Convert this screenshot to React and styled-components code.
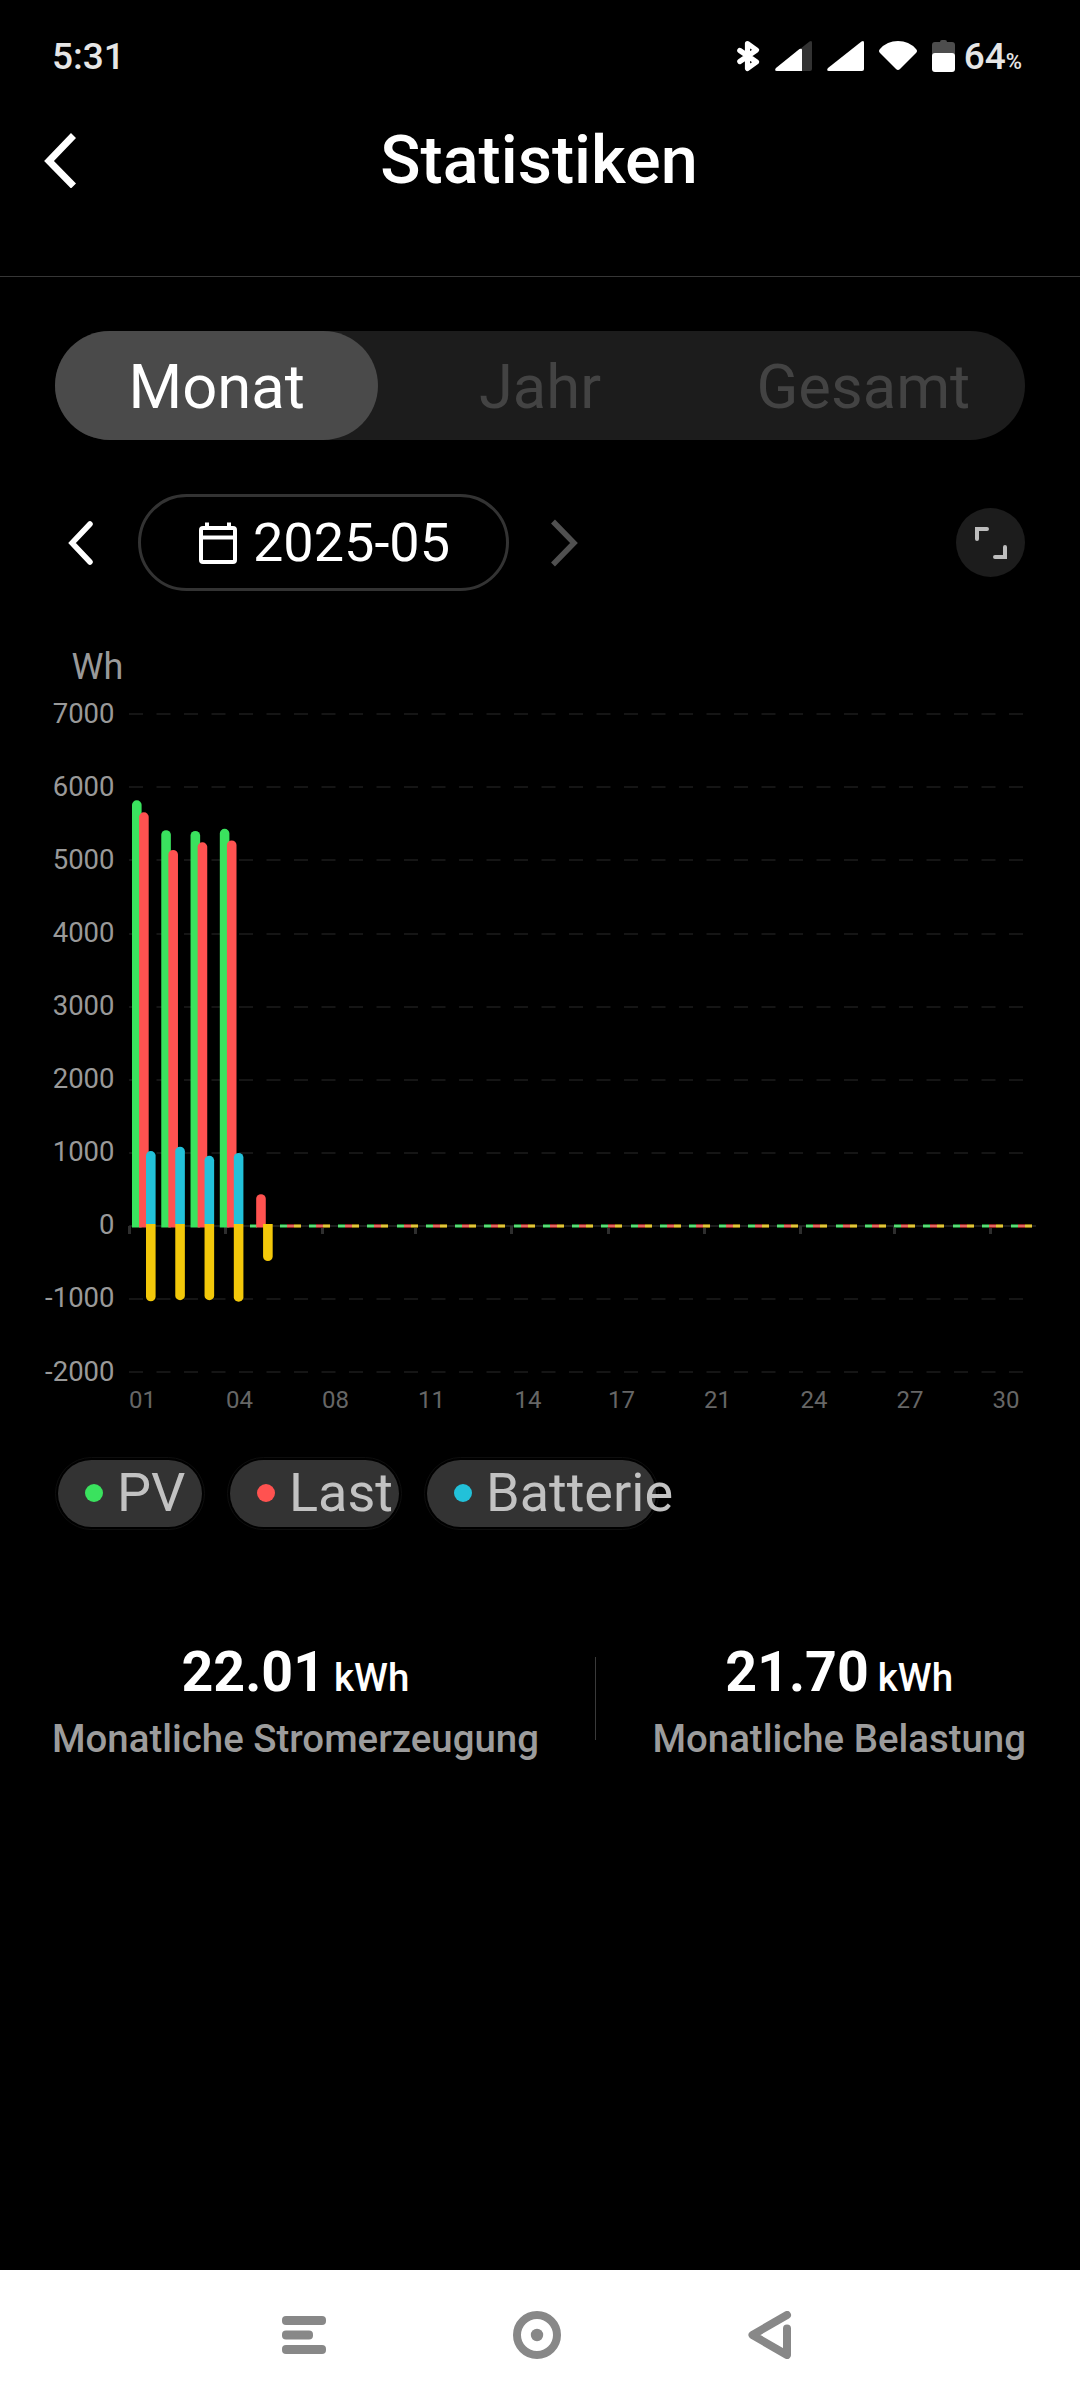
import React from "react";
import styled, { createGlobalStyle } from "styled-components";

const GlobalStyle = createGlobalStyle`
  * {
    box-sizing: border-box;
  }
  body {
    margin: 0;
    background: #000;
    font-family: Roboto, "Liberation Sans", sans-serif;
  }
`;

const Screen = styled.div`
  width: 1080px;
  height: 2400px;
  display: flex;
  flex-direction: column;
  background: #000;
  color: #fff;
  overflow: hidden;
`;

const StatusBar = styled.div`
  height: 112px;
  padding: 0 58px 0 52px;
  display: flex;
  align-items: center;
  justify-content: space-between;
  color: #e6e6e6;
  font-size: 37px;
  font-weight: 500;
  svg {
    display: block;
  }
`;

const StatusIcons = styled.div`
  display: flex;
  align-items: center;
  gap: 15px;
`;

const Battery = styled.div`
  display: flex;
  align-items: center;
  gap: 9px;
  small {
    font-size: 22px;
  }
`;

const Header = styled.header`
  height: 165px;
  padding: 0 44px 68px;
  display: grid;
  grid-template-columns: 32px 1fr 32px;
  align-items: center;
  border-bottom: 1px solid #363636;
`;

const Title = styled.h1`
  margin: 0 2px 0 0;
  font-size: 66.5px;
  font-weight: 500;
  text-align: center;
`;

const Tabs = styled.div`
  height: 109px;
  margin: 54px 55px 0;
  display: grid;
  grid-template-columns: repeat(3, 1fr);
  border-radius: 55px;
  background: #1c1c1c;
`;

const Tab = styled.div`
  padding-top: 2px;
  display: flex;
  align-items: center;
  justify-content: center;
  border-radius: 55px;
  font-size: 61.5px;
  color: ${props => (props.$active ? "#fff" : "#434343")};
  background: ${props => (props.$active ? "#4a4a4a" : "transparent")};
`;

const DateRow = styled.div`
  height: 97px;
  margin: 54px 55px 0;
  padding-left: 13px;
  display: flex;
  align-items: center;
`;

const DatePill = styled.div`
  width: 371px;
  height: 97px;
  margin: 0 42px 0 45px;
  padding-left: 2px;
  display: flex;
  align-items: center;
  justify-content: center;
  gap: 16px;
  border: 3px solid #333;
  border-radius: 49px;
  font-size: 54px;
`;

const ExpandButton = styled.div`
  width: 69px;
  height: 69px;
  margin-left: auto;
  display: flex;
  align-items: center;
  justify-content: center;
  border-radius: 50%;
  background: #1c1c1c;
`;

const ChartSvg = styled.svg`
  display: block;
  margin-top: 39px;
  flex: none;
  font-family: Roboto, "Liberation Sans", sans-serif;
`;

const Legend = styled.div`
  display: flex;
  gap: 22px;
  margin: 27px 0 0 55px;
`;

const LegendItem = styled.div`
  width: ${props => props.$width}px;
  height: 73px;
  padding: 2px;
  border: 1px solid #0e0e0e;
  border-radius: 37px;
`;

const LegendFill = styled.div`
  height: 67px;
  padding: 0 0 2px 27px;
  display: flex;
  align-items: center;
  gap: 14px;
  border-radius: 34px;
  background: #333;
  color: #c2c2c2;
  font-size: 54px;
  white-space: nowrap;
`;

const Dot = styled.span`
  flex: none;
  width: 18px;
  height: 18px;
  border-radius: 50%;
  background: ${props => props.$color};
`;

const Totals = styled.div`
  display: flex;
  align-items: center;
  justify-content: space-between;
  margin: 108px 54px 0 52px;
`;

const Total = styled.div`
  display: flex;
  flex-direction: column;
  align-items: center;
`;

const TotalValue = styled.div`
  height: 70px;
  line-height: 70px;
  font-size: 55.5px;
  font-weight: 700;
  span {
    margin-left: 9px;
    font-size: 38.5px;
    font-weight: 500;
  }
`;

const TotalLabel = styled.div`
  height: 62px;
  line-height: 62px;
  font-size: 38.4px;
  font-weight: 500;
  color: #9c9c9c;
`;

const TotalDivider = styled.div`
  width: 1px;
  height: 83px;
  margin-bottom: 11px;
  background: #3a3a3a;
`;

const NavBar = styled.nav`
  height: 130px;
  margin-top: auto;
  padding: 0 288px 0 282px;
  display: flex;
  align-items: center;
  justify-content: space-between;
  background: #fff;
`;

const GREEN = "#3ae25e";
const RED = "#ff5250";
const BLUE = "#22c1d9";
const YELLOW = "#f3c80a";

// [pv, load, charge, discharge] in Wh
const days = [
  [5825, 5660, 1025, -1030],
  [5415, 5145, 1085, -1015],
  [5405, 5250, 960, -1015],
  [5435, 5275, 1000, -1035],
  [0, 435, 0, -480]
];

const TOP = 714.3;
const STEP = 73.08;
const ZERO = 1226;
const FIRST_BAR = 132;
const DAY = 29.27;

const ticks = [
  { x: 129, labelX: 142.5, label: "01" },
  { x: 225, labelX: 239.5, label: "04" },
  { x: 322, labelX: 335.5, label: "08" },
  { x: 415, labelX: 431.5, label: "11" },
  { x: 511, labelX: 528, label: "14" },
  { x: 608, labelX: 621.5, label: "17" },
  { x: 704, labelX: 717.5, label: "21" },
  { x: 800, labelX: 814, label: "24" },
  { x: 894, labelX: 910, label: "27" },
  { x: 990, labelX: 1006, label: "30" }
];

const Bar = ({ x, value, color }) => {
  const y = ZERO - (value / 1000) * STEP;
  const up = value > 0;
  const base = up && color !== BLUE ? 1227.5 : 1224;
  const r = up ? 4.5 : -4.5;
  const sweep = up ? 1 : 0;
  return (
    <path
      fill={color}
      d={`M${x} ${base}V${y + r}a4.8 4.5 0 0 ${sweep} 4.8 ${-r}a4.8 4.5 0 0 ${sweep} 4.8 ${r}V${base}z`}
    />
  );
};

const EmptyBar = ({ x, color, edge }) => (
  <g>
    <rect x={x} y="1224" width="7" height="4" fill={edge} />
    <rect x={x} y="1225" width="7" height="2" fill={color} />
  </g>
);

const Chart = () => (
  <ChartSvg width="1080" height="800" viewBox="0 630 1080 800">
    <text x="71.5" y="679" fontSize="36" fill="#999">
      Wh
    </text>
    {[7, 6, 5, 4, 3, 2, 1, 0, -1, -2].map((n, i) => (
      <g key={n}>
        <text
          x="114.5"
          y={TOP + i * STEP + 8.5}
          textAnchor="end"
          fontSize="27.5"
          fill="#999"
        >
          {n * 1000}
        </text>
        {n !== 0 && (
          <line
            x1="129"
            x2="1024"
            y1={Math.round(TOP + i * STEP)}
            y2={Math.round(TOP + i * STEP)}
            stroke="#151515"
            strokeWidth="2"
            strokeDasharray="14 13.5"
          />
        )}
      </g>
    ))}
    <rect x="129" y="1225" width="907" height="2" fill="#1d1d1d" />
    {ticks.map(tick => (
      <g key={tick.label}>
        <rect x={tick.x - 1} y="1226" width="3" height="8" fill="#2e2e2e" />
        <text
          x={tick.labelX}
          y="1408"
          textAnchor="middle"
          fontSize="24"
          fill="#666"
        >
          {tick.label}
        </text>
      </g>
    ))}
    {Array.from({ length: 31 }, (_, i) => {
      const x = FIRST_BAR + i * DAY;
      const left = Math.round(x + 1.15);
      const day = days[i];
      if (!day) {
        return (
          <g key={i}>
            <EmptyBar x={left} color="#5cd979" edge="#167a2b" />
            <EmptyBar x={left + 7} color="#e2645f" edge="#8e2222" />
            <EmptyBar x={left + 14} color="#e0c53c" edge="#85700d" />
          </g>
        );
      }
      const [pv, load, charge, discharge] = day;
      return (
        <g key={i}>
          {pv > 0 ? (
            <Bar x={x} value={pv} color={GREEN} />
          ) : (
            <EmptyBar x={left} color="#5cd979" edge="#167a2b" />
          )}
          <Bar x={x + 7.1} value={load} color={RED} />
          {charge > 0 && <Bar x={x + 14} value={charge} color={BLUE} />}
          <Bar x={x + 14} value={discharge} color={YELLOW} />
        </g>
      );
    })}
  </ChartSvg>
);

const BluetoothIcon = () => (
  <svg width="23" height="32" viewBox="0 0 23 32" fill="none">
    <path
      d="M2.800 10.500L19.500 22 10.500 28.500V3.500L19.500 10 2.800 21.500"
      stroke="#fff"
      strokeWidth="5.200"
      strokeLinejoin="round"
      strokeLinecap="round"
    />
  </svg>
);

const SignalIcon = ({ weak }) => (
  <svg width="37" height="32" viewBox="0 0 37 32">
    <path
      d="M2 31h33q2 0 2-2V2.500q0-2.500-2.500-1L1 28q-2 3 1 3z"
      fill={weak ? "#333" : "#fff"}
    />
    {weak && <path d="M2 31h25V10q0-2-2.500-1L1 28q-2 3 1 3z" fill="#fff" />}
  </svg>
);

const WifiIcon = () => (
  <svg width="38" height="32" viewBox="0 0 38 32">
    <path
      d="M1 9Q8 1 19 1t18 8q2 2 0 4L21 29q-2 2-4 0L1 13q-2-2 0-4z"
      fill="#fff"
    />
  </svg>
);

const BatteryIcon = () => (
  <svg width="23" height="32" viewBox="0 0 23 32">
    <path
      d="M8 2q0-2 2-2h3q2 0 2 2h5q3 0 3 3v14H0V5q0-3 3-3z"
      fill="#4d4d4d"
    />
    <rect y="13" width="23" height="19" rx="3" fill="#fff" />
  </svg>
);

const legend = [
  { name: "PV", color: GREEN, width: 150 },
  { name: "Last", color: RED, width: 175 },
  { name: "Batterie", color: BLUE, width: 235 }
];

const App = () => (
  <>
    <GlobalStyle />
    <Screen>
      <StatusBar>
        <span>5:31</span>
        <StatusIcons>
          <BluetoothIcon />
          <SignalIcon weak />
          <SignalIcon />
          <WifiIcon />
          <Battery>
            <BatteryIcon />
            <span>
              64<small>%</small>
            </span>
          </Battery>
        </StatusIcons>
      </StatusBar>
      <Header>
        <svg width="32" height="56" viewBox="0 0 32 56" fill="none">
          <path d="M29.500 3.500L5 29l24.500 25" stroke="#fff" strokeWidth="7" />
        </svg>
        <Title>Statistiken</Title>
      </Header>
      <Tabs>
        <Tab $active>Monat</Tab>
        <Tab>Jahr</Tab>
        <Tab>Gesamt</Tab>
      </Tabs>
      <DateRow>
        <svg width="25" height="44" viewBox="0 0 25 44" fill="none">
          <path
            d="M22 3L4 22l18 19"
            stroke="#fff"
            strokeWidth="5.500"
            strokeLinecap="round"
          />
        </svg>
        <DatePill>
          <svg width="38" height="42" viewBox="0 0 38 42" fill="none">
            <path
              d="M4 6h30q2 0 2 2v30q0 2-2 2H4q-2 0-2-2V8q0-2 2-2zM2 15.500h34M8 6V0.500M30 6V0.500"
              stroke="#fff"
              strokeWidth="4"
            />
          </svg>
          2025-05
        </DatePill>
        <svg width="27" height="48" viewBox="0 0 27 48" fill="none">
          <path d="M2 2.500L23 24 2 45.500" stroke="#505050" strokeWidth="5.500" />
        </svg>
        <ExpandButton>
          <svg width="32" height="32" viewBox="0 0 32 32" fill="none">
            <path
              d="M2 12V2h10M30 20v10H20"
              stroke="#bdbdbd"
              strokeWidth="4"
              strokeLinecap="round"
            />
          </svg>
        </ExpandButton>
      </DateRow>
      <Chart />
      <Legend>
        {legend.map(item => (
          <LegendItem key={item.name} $width={item.width}>
            <LegendFill>
              <Dot $color={item.color} />
              {item.name}
            </LegendFill>
          </LegendItem>
        ))}
      </Legend>
      <Totals>
        <Total>
          <TotalValue>
            22.01<span>kWh</span>
          </TotalValue>
          <TotalLabel>Monatliche Stromerzeugung</TotalLabel>
        </Total>
        <TotalDivider />
        <Total>
          <TotalValue>
            21.70<span>kWh</span>
          </TotalValue>
          <TotalLabel>Monatliche Belastung</TotalLabel>
        </Total>
      </Totals>
      <NavBar>
        <svg width="44" height="38" viewBox="0 0 44 38" fill="#888">
          <rect width="44" height="9" rx="4" />
          <rect y="14.500" width="31" height="9" rx="4" />
          <rect y="29" width="44" height="9" rx="4" />
        </svg>
        <svg width="48" height="48" viewBox="0 0 48 48">
          <circle
            cx="24"
            cy="24"
            r="20"
            fill="none"
            stroke="#888"
            strokeWidth="8"
          />
          <circle cx="24" cy="24" r="6.200" fill="#888" />
        </svg>
        <svg width="44" height="48" viewBox="0 0 44 48" fill="none">
          <path
            d="M39 4L4.500 24 39 44V17.500"
            stroke="#888"
            strokeWidth="8"
            strokeLinecap="round"
            strokeLinejoin="round"
          />
        </svg>
      </NavBar>
    </Screen>
  </>
);

export default App;
